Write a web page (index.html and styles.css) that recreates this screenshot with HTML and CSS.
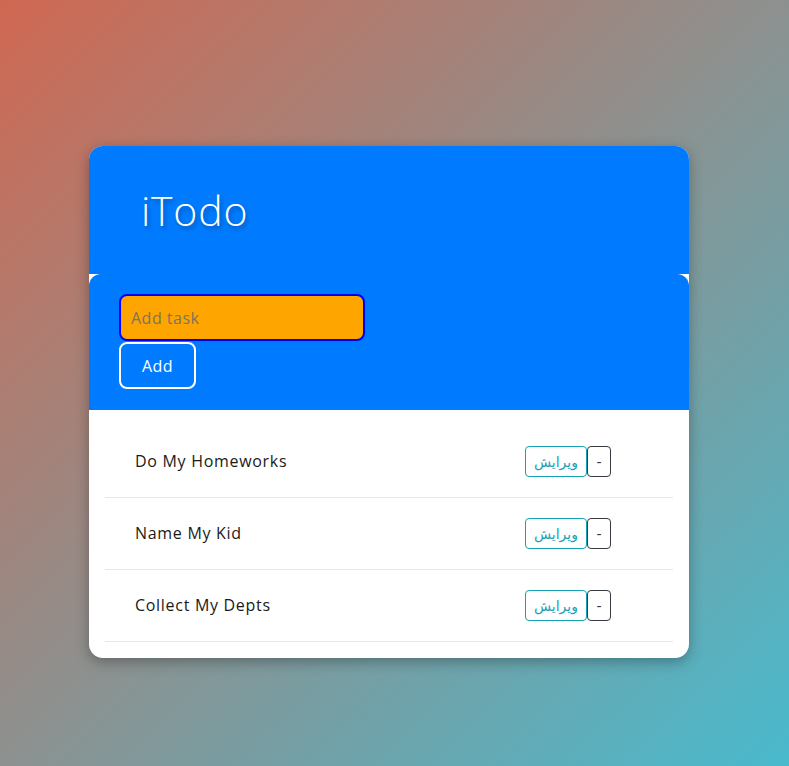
FILE: index.html
```html
<!DOCTYPE html>
<html lang="en">
<head>
<meta charset="utf-8">
<title>iTodo</title>
<link rel="stylesheet" href="styles.css">
</head>
<body>
<div class="card">
  <header class="card-header">
    <h1 class="title">iTodo</h1>
  </header>
  <form class="add-form">
    <input class="task-input" type="text" placeholder="Add task">
    <button class="add-btn" type="button">Add</button>
  </form>
  <ul class="list">
    <li class="item">
      <span class="item-text">Do My Homeworks</span>
      <span class="actions"><button class="btn-edit" type="button">ویرایش</button><button class="btn-del" type="button">-</button></span>
    </li>
    <li class="item">
      <span class="item-text">Name My Kid</span>
      <span class="actions"><button class="btn-edit" type="button">ویرایش</button><button class="btn-del" type="button">-</button></span>
    </li>
    <li class="item">
      <span class="item-text">Collect My Depts</span>
      <span class="actions"><button class="btn-edit" type="button">ویرایش</button><button class="btn-del" type="button">-</button></span>
    </li>
  </ul>
</div>
</body>
</html>
```
FILE: styles.css
```css
* { box-sizing: border-box; }
html, body { height: 100%; }
body {
  margin: 0;
  min-height: 766px;
  background: linear-gradient(to bottom right, #d06852, #49bacd);
  font-family: "Open Sans", "DejaVu Sans", sans-serif;
  padding: 146px 0 0 89px;
}
.card {
  width: 600px;
  background: #fff;
  border-radius: 14px;
  overflow: hidden;
  box-shadow: 0 4px 14px rgba(0,0,0,0.3);
}
.card-header {
  background: #007bff;
  height: 128px;
  padding: 38px 52px 0;
}
.title {
  margin: 0;
  color: #fff;
  font-weight: 300;
  font-size: 41px;
  line-height: 52px;
  letter-spacing: 0.8px;
  text-shadow: 2px 3px 4px rgba(0,0,0,0.3);
}
.add-form {
  background: #007bff;
  border-radius: 12px 12px 0 0;
  height: 136px;
  padding: 20px 30px 0;
  display: flex;
  flex-direction: column;
  align-items: flex-start;
}
.task-input {
  width: 246px;
  height: 47px;
  border: 2px solid #0000ff;
  border-radius: 8px;
  background: #ffa500;
  padding: 0 10px;
  font: inherit;
  font-size: 16px;
  letter-spacing: 0.5px;
  color: #333;
  outline: none;
}
.task-input::placeholder { color: #7a7461; }
.add-btn {
  margin-top: 1px;
  width: 77px;
  height: 47px;
  border: 2px solid #fff;
  border-radius: 8px;
  background: transparent;
  color: #fff;
  font: inherit;
  font-size: 16px;
  letter-spacing: 0.5px;
}
.list {
  list-style: none;
  margin: 0;
  padding: 16px 16px 16px;
}
.item {
  height: 72px;
  display: flex;
  align-items: center;
  justify-content: space-between;
  padding: 0 62px 0 30px;
  border-bottom: 1px solid #e6e6e6;
  color: #1a1a1a;
  font-size: 16px;
  letter-spacing: 0.7px;
}
.item-text { margin-top: -2px; }
.actions { display: flex; }
.btn-edit, .btn-del {
  height: 31px;
  background: #fff;
  font-family: "DejaVu Sans", sans-serif;
  font-size: 14px;
  border-radius: 4px;
  padding: 0;
}
.btn-edit {
  width: 62px;
  border: 1px solid #17a2b8;
  color: #17a2b8;
}
.btn-del {
  width: 24px;
  border: 1px solid #343a40;
  color: #343a40;
}
```
